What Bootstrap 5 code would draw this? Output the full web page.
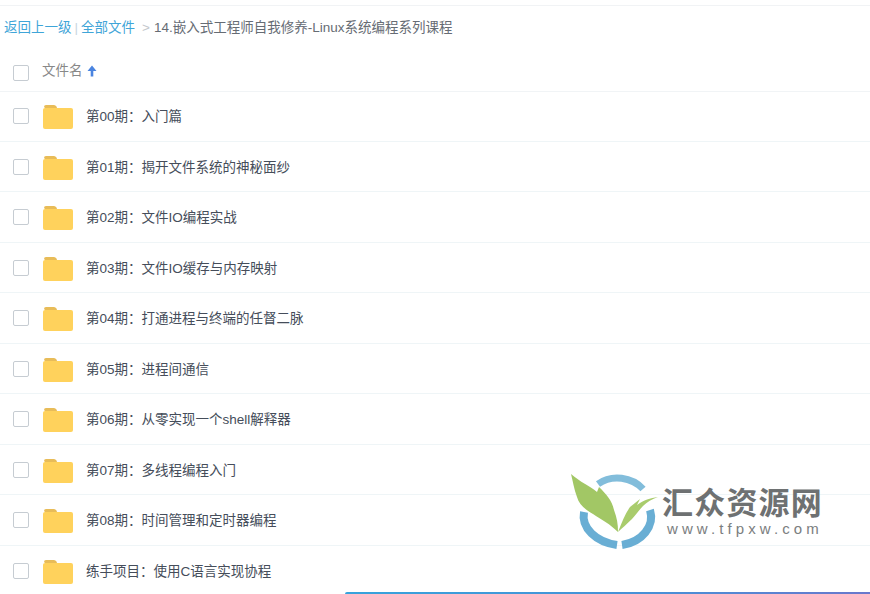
<!DOCTYPE html>
<html lang="zh">
<head>
  <meta charset="UTF-8">
  <title>全部文件</title>
  <link href="https://cdn.jsdelivr.net/npm/bootstrap@5.3.0/dist/css/bootstrap.min.css" rel="stylesheet">
  <style>
    html, body { height: 594px; overflow: hidden; }
    body {
      position: relative;
      background: #fff;
      color: #454d5a;
      font-family: "Liberation Sans", "Noto Sans CJK SC", sans-serif;
      font-size: 13.5px;
      padding-top: 5px;
    }
    .crumbs {
      height: 46px;
      gap: 3px;
      padding-left: 4px;
      border-top: 1px solid #f1f3f5;
      color: #c4c8cc;
    }
    .crumbs a { color: #3fa5d8; text-decoration: none; }
    .crumbs .sep { color: #c9d6de; }
    .crumbs .here { color: #666c74; margin-left: 1px; }
    .file-head { height: 41px; color: #888; border-bottom: 1px solid #f1f4f6; }
    .file-head .tick { margin-top: 4px; margin-right: 13px; }
    .file-row { height: 50.5px; padding-top: 3px; border-bottom: 1px solid #eff5f7; }
    .file-list { margin-top: -1px; }
    .tick {
      width: 16px; height: 16px;
      margin-left: 13px; margin-right: 15px;
      margin-top: -2px;
      border: 1px solid #c6ccd2;
      border-radius: 2px;
      background: #fff;
      flex: none;
    }
    .folder { width: 30px; height: 24px; flex: none; margin-left: -1px; margin-right: 13px; }
    .brand { position: absolute; left: 570px; top: 474px; width: 90px; height: 76px; }
    .brand-name {
      position: absolute; left: 662px; top: 484px;
      font: 700 31px/34px "Noto Sans CJK SC", sans-serif;
      letter-spacing: 1.2px;
      color: #6e7172;
      white-space: nowrap;
    }
    .brand-url {
      position: absolute; left: 667px; top: 519px;
      font: 15px/20px "Liberation Sans", sans-serif;
      letter-spacing: 4.1px;
      color: #7b7e80;
      white-space: nowrap;
    }
    .bottom-bar {
      position: absolute; left: 345px; right: 0; top: 592px; height: 2px;
      border-radius: 2px 0 0 0;
      background: linear-gradient(90deg, #37a3dc, #4a8fd6 60%, #6a78cc);
    }
  </style>
</head>
<body>
  <div class="crumbs d-flex align-items-center">
    <a href="#">返回上一级</a><span class="sep">|</span><a href="#">全部文件</a>
    <span class="ms-1">&gt;</span>
    <span class="here">14.嵌入式工程师自我修养-Linux系统编程系列课程</span>
  </div>

  <div class="file-head d-flex align-items-center">
    <span class="tick"></span>
    <span>文件名</span>
    <svg class="ms-1" width="10" height="12" viewBox="0 0 10 12"><path d="M5 .5 9.500 6H6.300V11.500H3.700V6H.5Z" fill="#4a84e0"/></svg>
  </div>

  <div id="files" class="file-list"></div>

  <svg class="brand" viewBox="0 0 90 76" fill="none">
    <path d="M28 10C42 0 62 3 73 15" stroke="#82bddb" stroke-width="7"/>
    <path d="M14 38C11 54 26 68 47 71" stroke="#69aed4" stroke-width="8"/>
    <path d="M80 36C85 52 72 68 52 71" stroke="#69aed4" stroke-width="8"/>
    <path d="M1 0C10 8 20 12 27 18L29 13C36 20 42 26 44 36 47 44 48 50 48 58 40 50 32 46 23 40 14 35 9 30 7 23 4 15 3 8 1 0Z" fill="#a2c765"/>
    <path d="M48 58C52 48 55 40 60 33L70 25 67 31C74 26 80 24 88 23 82 25 77 28 73 32 69 36 66 41 62 45 57 50 52 54 48 58Z" fill="#a9cc6c"/>
  </svg>
  <div class="brand-name">汇众资源网</div>
  <div class="brand-url">www.tfpxw.com</div>
  <div class="bottom-bar"></div>

  <script>
    // folder rows
    var names = ['第00期：入门篇', '第01期：揭开文件系统的神秘面纱', '第02期：文件IO编程实战',
      '第03期：文件IO缓存与内存映射', '第04期：打通进程与终端的任督二脉', '第05期：进程间通信',
      '第06期：从零实现一个shell解释器', '第07期：多线程编程入门', '第08期：时间管理和定时器编程',
      '练手项目：使用C语言实现协程'];
    var icon = '<svg class="folder" viewBox="0 0 30 24"><path d="M1 2Q1 0 3 0H11Q12.500 0 13.500 1.500L14 3H2Z" fill="#e8bc58"/><path d="M0 4.500Q0 3 2 3H28Q30 3 30 5V22Q30 24 28 24H2Q0 24 0 22Z" fill="#ffd25c"/></svg>';
    document.getElementById('files').innerHTML = names.map(function (n) {
      return '<div class="file-row d-flex align-items-center"><span class="tick"></span>' + icon + '<span>' + n + '</span></div>';
    }).join('');
  </script>
  <script src="https://cdn.jsdelivr.net/npm/bootstrap@5.3.0/dist/js/bootstrap.bundle.min.js"></script>
</body>
</html>
